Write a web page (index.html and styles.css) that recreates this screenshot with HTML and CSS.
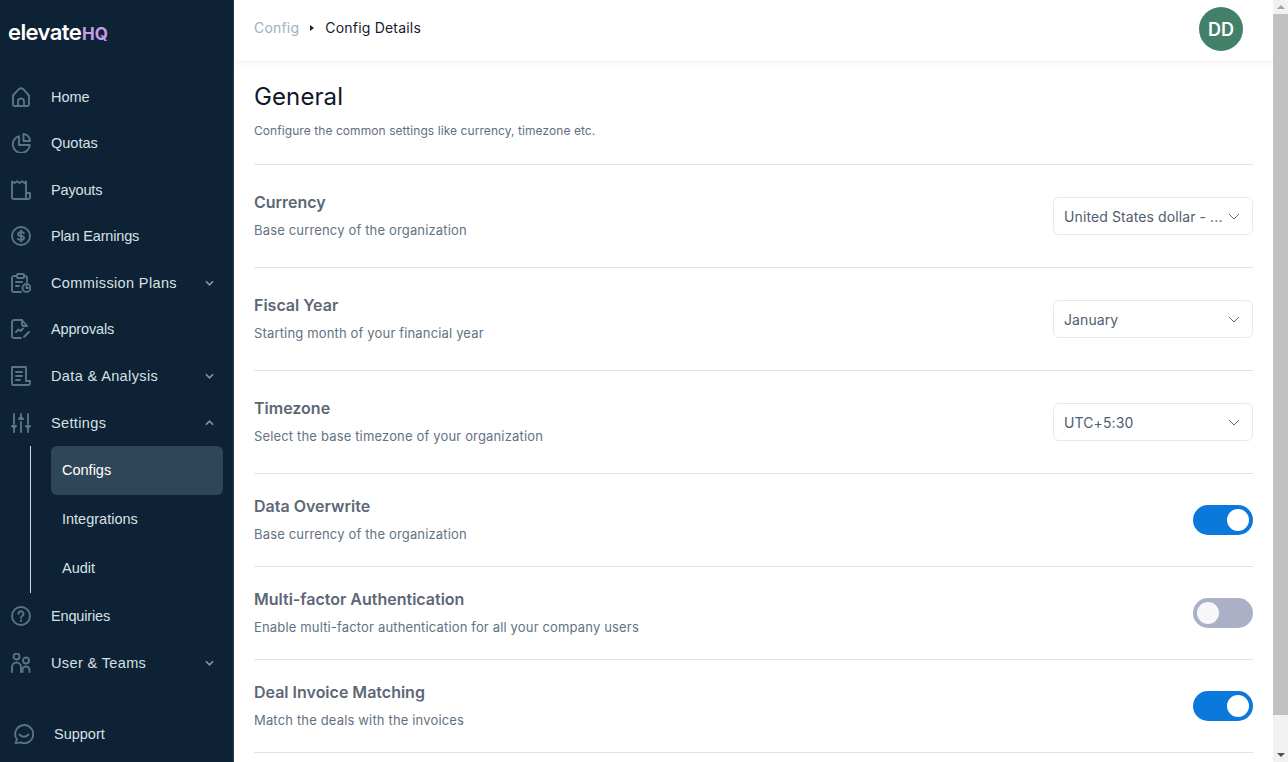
FILE: index.html
```html
<!DOCTYPE html>
<html lang="en">
<head>
<meta charset="utf-8">
<title>Config Details</title>
<link rel="stylesheet" href="styles.css">
</head>
<body>
<div class="app">
  <aside class="sidebar">
    <div class="logo"><span class="logo-main">elevate</span><span class="logo-hq">HQ</span></div>
    <nav class="nav">
      <a class="nav-item"><svg class="nav-icon" viewBox="0 0 20 20"><path d="M2 8.500 7.800 2.200q2.200-2 4.400 0L18 8.500V17.500a1.500 1.500 0 0 1-1.500 1.500H3.500A1.500 1.500 0 0 1 2 17.500Z"/><path d="M7 19v-4.500a3 3 0 0 1 6 0V19"/></svg><span>Home</span></a>
      <a class="nav-item"><svg class="nav-icon" viewBox="0 0 20 20"><path d="M8 3.200A8.500 8.500 0 1 0 18.800 12H8Z"/><path d="M12.500 1a7 7 0 0 1 6.500 7h-6.500Z"/></svg><span>Quotas</span></a>
      <a class="nav-item"><svg class="nav-icon" viewBox="0 0 20 20"><path d="M1 1.500 3.500 3 6 1.200 8.500 3 11 1.200 13.500 3 15 1.500V19H2.500A1.500 1.500 0 0 1 1 17.500Z"/><path d="M15 13h4v4.500a1.500 1.500 0 0 1-1.500 1.500H15"/></svg><span class="tight">Payouts</span></a>
      <a class="nav-item"><svg class="nav-icon" viewBox="0 0 20 20"><circle cx="10" cy="10" r="9"/><path d="M13 7.200Q12.500 6 10 6T7 8q0 2 3 2t3 2q0 2-3 2t-3-1.200M10 4.500v11"/></svg><span class="tight">Plan Earnings</span></a>
      <a class="nav-item has-caret"><svg class="nav-icon" viewBox="0 0 20 20"><path d="M6 3H3a2 2 0 0 0-2 2v12a2 2 0 0 0 2 2h7M13 3h1a2 2 0 0 1 2 2v4"/><rect x="6" y="1" width="7" height="4" rx="1"/><path d="M5 9h6M5 13h3"/><circle cx="15.500" cy="15" r="4"/><path d="M15.500 13v2h2"/></svg><span class="wide">Commission Plans</span><svg class="caret" viewBox="0 0 10 6"><path d="M1 1l4 4 4-4"/></svg></a>
      <a class="nav-item"><svg class="nav-icon" viewBox="0 0 20 20"><path d="M16 7 11 1H3a2 2 0 0 0-2 2v14a2 2 0 0 0 2 2h7"/><path d="M11 1v4a2 2 0 0 0 2 2h3"/><path d="M5 13l2.500-2.500 2 1.500 2.500-2.500M13 18l5-5"/></svg><span class="tight">Approvals</span></a>
      <a class="nav-item has-caret"><svg class="nav-icon" viewBox="0 0 20 20"><path d="M15 15V1H1v17a1 1 0 0 0 1 1h15.500a1.500 1.500 0 0 0 1.500-1.500V15h-4Z"/><path d="M5 6h6M5 10h6M5 14h4"/></svg><span class="wide">Data &amp; Analysis</span><svg class="caret" viewBox="0 0 10 6"><path d="M1 1l4 4 4-4"/></svg></a>
      <a class="nav-item has-caret settings"><svg class="nav-icon" viewBox="0 0 20 20"><path d="M3 1v10M3 16v3M10 1v3M10 9v10M17 1v10M17 16v3"/><path d="M1 13h4l-2 2ZM8 6l2-2 2 2ZM15 13h4l-2 2Z"/></svg><span class="wide">Settings</span><svg class="caret" viewBox="0 0 10 6"><path d="M1 5l4-4 4 4"/></svg></a>
      <div class="subnav">
        <a class="sub-item active">Configs</a>
        <a class="sub-item">Integrations</a>
        <a class="sub-item">Audit</a>
      </div>
      <a class="nav-item"><svg class="nav-icon" viewBox="0 0 20 20"><circle cx="10" cy="10" r="9"/><path d="M7.500 7.800A2.500 2.500 0 1 1 11 10q-1 .6-1 2"/><path d="M10 14.500v.6"/></svg><span class="tight">Enquiries</span></a>
      <a class="nav-item has-caret"><svg class="nav-icon" viewBox="0 0 20 20"><circle cx="5.500" cy="3.500" r="3"/><circle cx="15" cy="7.500" r="3"/><path d="M1 19v-5a4.500 4.500 0 0 1 9 0v5M11.500 19v-2a3.500 3.500 0 0 1 7 0v2"/></svg><span class="wide">User &amp; Teams</span><svg class="caret" viewBox="0 0 10 6"><path d="M1 1l4 4 4-4"/></svg></a>
    </nav>
    <a class="support"><svg class="nav-icon" viewBox="0 0 20 20"><path d="M1.500 19 3 15.500A9 9 0 1 1 6.500 18.300Q4 19 1.500 19Z"/><path d="M5.500 10.500q4.500 4.500 9 0"/></svg><span>Support</span></a>
  </aside>
  <div class="main">
    <header class="topbar">
      <div class="crumbs">
        <span class="crumb-link">Config</span>
        <span class="crumb-sep"></span>
        <span class="crumb-current">Config Details</span>
      </div>
      <div class="avatar">DD</div>
    </header>
    <section class="content">
      <div class="page-head">
        <h1>General</h1>
        <p class="page-sub">Configure the common settings like currency, timezone etc.</p>
      </div>
      <div class="row row-select">
        <div><h2>Currency</h2><p>Base currency of the organization</p></div>
        <div class="select"><span>United States dollar - ...</span><svg viewBox="0 0 12 7"><path d="M1 1l5 5 5-5"/></svg></div>
      </div>
      <div class="row row-select">
        <div><h2>Fiscal Year</h2><p>Starting month of your financial year</p></div>
        <div class="select"><span>January</span><svg viewBox="0 0 12 7"><path d="M1 1l5 5 5-5"/></svg></div>
      </div>
      <div class="row row-select">
        <div><h2>Timezone</h2><p>Select the base timezone of your organization</p></div>
        <div class="select"><span>UTC+5:30</span><svg viewBox="0 0 12 7"><path d="M1 1l5 5 5-5"/></svg></div>
      </div>
      <div class="row">
        <div><h2>Data Overwrite</h2><p>Base currency of the organization</p></div>
        <div class="toggle on"><i></i></div>
      </div>
      <div class="row">
        <div><h2>Multi-factor Authentication</h2><p>Enable multi-factor authentication for all your company users</p></div>
        <div class="toggle"><i></i></div>
      </div>
      <div class="row">
        <div><h2>Deal Invoice Matching</h2><p>Match the deals with the invoices</p></div>
        <div class="toggle on"><i></i></div>
      </div>
    </section>
  </div>
  <div class="scrollbar">
    <div class="sb-btn"><b class="arrow-up"></b></div>
    <div class="sb-thumb"></div>
    <div class="sb-rest"></div>
    <div class="sb-btn"><b class="arrow-down"></b></div>
  </div>
</div>
</body>
</html>
```
FILE: styles.css
```css
* { box-sizing: border-box; }
html, body { margin: 0; height: 762px; overflow: hidden; background: #fff; }
body { font-family: Inter, "Liberation Sans", sans-serif; }
.app { display: flex; height: 762px; }

.sidebar { width: 234px; flex: none; background: #0d2234; display: flex; flex-direction: column; font-family: "Liberation Sans", Arial, sans-serif; border-right: 1px solid #2a3f50; }
.logo { height: 73.5px; flex: none; padding: 20px 0 0 8px; line-height: 24px; font-family: Inter, sans-serif; white-space: nowrap; }
.logo-main { color: #fff; font-size: 22px; font-weight: 600; letter-spacing: -0.6px; }
.logo-hq { color: #c69cec; font-size: 17px; font-weight: 700; margin-left: 1px; }
.nav { display: flex; flex-direction: column; }
.nav-item { height: 46.5px; flex: none; display: flex; align-items: center; padding-left: 11px; color: #d8e0e6; font-size: 14.5px; }
.nav-item.settings { padding-top: 1px; }
.nav-item span { margin-left: 20px; }
.nav-item .wide { letter-spacing: .37px; }
.nav-item .tight { letter-spacing: -.16px; }
.nav-icon { width: 20px; height: 20px; flex: none; fill: none; stroke: #5a7387; stroke-width: 1.9; stroke-linecap: round; stroke-linejoin: round; }
.caret { width: 9px; height: 6px; margin-left: auto; margin-right: 19px; fill: none; stroke: #8396a5; stroke-width: 1.8; }
.subnav { display: flex; flex-direction: column; margin: .5px 0 0 30px; padding-left: 20px; border-left: 1px solid #d5dce1; }
.sub-item { height: 49px; display: flex; align-items: center; padding: 0 0 1px 11px; width: 172px; color: #d8e0e6; font-size: 14.5px; border-radius: 6px; }
.sub-item.active { background: #2f4558; color: #fff; }
.support { margin-top: auto; height: 56px; padding-left: 14px; display: flex; align-items: center; color: #d8e0e6; font-size: 14.5px; }
.support span { margin-left: 20px; }

.main { flex: 1; min-width: 0; display: flex; flex-direction: column; }
.topbar { height: 61px; flex: none; display: flex; align-items: center; justify-content: space-between; padding: 0 30px 3px 20px; box-shadow: 0 1px 6px rgba(0,0,0,.07); }
.crumbs { display: flex; align-items: center; font-size: 14px; letter-spacing: .2px; padding-bottom: 3px; }
.crumb-link { color: #a3b0bd; }
.crumb-sep { width: 0; height: 0; margin: 0 11px; border-left: 4px solid #1a2433; border-top: 3.5px solid transparent; border-bottom: 3.5px solid transparent; }
.crumb-current { color: #17202e; }
.avatar { width: 44px; height: 44px; border-radius: 50%; background: #43806a; color: #fff; font-size: 18px; font-weight: 600; display: flex; align-items: center; justify-content: center; }
.content { padding: 0 20px; }
.page-head { height: 104px; padding-top: 21px; border-bottom: 1px solid #e1e3e6; }
h1 { margin: 0; font-size: 24px; line-height: 30px; font-weight: 400; color: #111827; letter-spacing: .1px; }
.page-sub { margin: 10px 0 0; font-size: 12px; line-height: 18px; color: #5f7080; letter-spacing: .07px; }
.row { height: 93px; display: flex; align-items: center; justify-content: space-between; border-bottom: 1px solid #e1e3e6; }
.row-select { height: 103px; }
h2 { margin: 0; font-size: 16px; line-height: 20px; font-weight: 600; color: #5d6776; }
.row p { margin: 9px 0 1px; font-size: 13px; line-height: 18px; color: #627282; letter-spacing: .16px; }
.select { width: 200px; height: 38px; border: 1px solid #e6e8ef; border-radius: 6px; display: flex; align-items: center; justify-content: space-between; padding: 0 12px 0 10px; font-size: 14px; color: #4f5d70; letter-spacing: .1px; }
.select svg { width: 12px; height: 7px; fill: none; stroke: #5e6b7a; stroke-width: 1; }
.toggle { width: 60px; height: 30px; border-radius: 15px; background: #abb0c7; padding: 4px; display: flex; }
.toggle i { width: 22px; height: 22px; border-radius: 50%; background: #f7f7f9; }
.toggle.on { background: #0b78dc; justify-content: flex-end; }
.toggle.on i { background: #fff; }

.scrollbar { width: 15px; flex: none; background: #f1f1f1; display: flex; flex-direction: column; }
.sb-btn { height: 14px; flex: none; display: flex; align-items: center; justify-content: center; }
.sb-thumb { height: 701px; background: #c1c1c1; }
.sb-rest { flex: 1; }
.arrow-up { border-left: 4px solid transparent; border-right: 4px solid transparent; border-bottom: 4px solid #a3a3a3; }
.arrow-down { border-left: 4px solid transparent; border-right: 4px solid transparent; border-top: 4px solid #505050; }
```
